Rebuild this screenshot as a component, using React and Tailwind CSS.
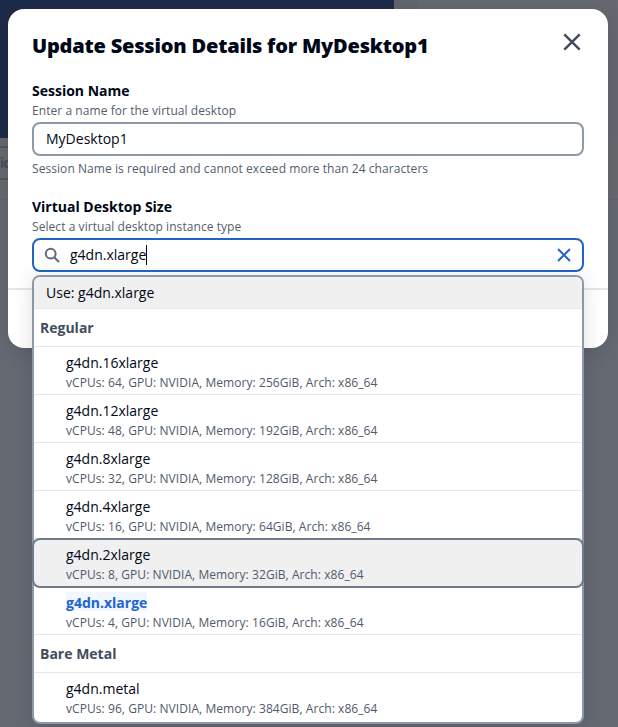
import React from 'react';

const regular = [
  { name: 'g4dn.16xlarge', spec: 'vCPUs: 64, GPU: NVIDIA, Memory: 256GiB, Arch: x86_64' },
  { name: 'g4dn.12xlarge', spec: 'vCPUs: 48, GPU: NVIDIA, Memory: 192GiB, Arch: x86_64' },
  { name: 'g4dn.8xlarge', spec: 'vCPUs: 32, GPU: NVIDIA, Memory: 128GiB, Arch: x86_64' },
  { name: 'g4dn.4xlarge', spec: 'vCPUs: 16, GPU: NVIDIA, Memory: 64GiB, Arch: x86_64' },
  { name: 'g4dn.2xlarge', spec: 'vCPUs: 8, GPU: NVIDIA, Memory: 32GiB, Arch: x86_64', highlighted: true },
  { name: 'g4dn.xlarge', spec: 'vCPUs: 4, GPU: NVIDIA, Memory: 16GiB, Arch: x86_64', match: true },
];
const bareMetal = [
  { name: 'g4dn.metal', spec: 'vCPUs: 96, GPU: NVIDIA, Memory: 384GiB, Arch: x86_64' },
];

function Option({ name, spec, highlighted, match, last }) {
  const frame = highlighted
    ? 'relative z-10 -mx-0.5 -mt-px -mb-px h-[50px] rounded-lg border-2 border-[#6f7c8c] bg-[#f0f0f0] pl-8 pt-1'
    : last
      ? 'h-12 pl-8 pt-[5px]'
      : 'h-12 border-b border-[#e4e6e8] pl-8 pt-[5px]';
  return (
    <li className={frame}>
      <div className="h-[22px] text-sm leading-[22px]">
        {match ? (
          <span className="inline-block h-[19px] bg-[#f0f7ff] align-top font-bold leading-[22px] text-[#2264d1]">
            {name}
          </span>
        ) : (
          name
        )}
      </div>
      <div className="pt-px text-xs leading-4 tracking-[0.065px] text-[#4f596b]">{spec}</div>
    </li>
  );
}

function GroupHeader({ children }) {
  return (
    <div className="h-[38px] border-b border-[#e4e6e8] pl-1.5 pt-2 text-sm font-bold leading-[22px] text-[#414d5c]">
      {children}
    </div>
  );
}

function Dropdown() {
  return (
    <div className="absolute left-0 top-[37px] z-20 h-[449px] w-full rounded-lg border-2 border-[#8d99a8] bg-white shadow-[0_4px_20px_1px_rgba(0,7,22,0.12)]">
      <div className="h-8 rounded-t-md border-b border-[#e4e6e8] bg-[#f0f0f0] pl-3 pt-[5px] text-sm leading-[22px]">
        Use: g4dn.xlarge
      </div>
      <GroupHeader>Regular</GroupHeader>
      <ul>{regular.map((o) => <Option key={o.name} {...o} />)}</ul>
      <GroupHeader>Bare Metal</GroupHeader>
      <ul>{bareMetal.map((o) => <Option key={o.name} {...o} last />)}</ul>
    </div>
  );
}

function Backdrop() {
  return (
    <div className="absolute inset-0">
      <div className="flex h-[138px]">
        <div className="w-[394px] bg-[#1d2b4a]" />
        <div className="w-6 bg-[#62656e]" />
        <div className="grow bg-[#656870]" />
      </div>
      <div className="h-[62px] w-full border-b border-[#5f636c] bg-[#66696f] pt-2">
        <div className="h-[34px] w-10 border-y-2 border-[#505764] text-sm font-bold leading-[30px] tracking-[-1px] text-[#474e5b]">
          io
        </div>
      </div>
    </div>
  );
}

export default function App() {
  return (
    <div className="relative h-[727px] w-[618px] overflow-hidden bg-[#656972] px-2 pt-[9px] font-['Open_Sans','Noto_Sans',sans-serif] text-[#000716]">
      <Backdrop />
      <div className="relative h-[339px] w-[600px] rounded-2xl bg-white shadow-[0_4px_20px_1px_rgba(0,7,22,0.10)]">
        <div className="flex h-[70px] justify-between px-6 pt-[25px]">
          <h1 className="text-xl font-extrabold leading-6 tracking-[-0.2px]">Update Session Details for MyDesktop1</h1>
          <button aria-label="Close" className="h-4 w-6">
            <svg width="24" height="16" viewBox="0 0 24 16" fill="none" stroke="#414d5c" strokeWidth="2.5" className="overflow-visible">
              <path d="M4.3 0.3 19.7 15.7M19.7 0.3 4.3 15.7" />
            </svg>
          </button>
        </div>
        <div className="h-[211px] border-b-2 border-[#e4e6e8] px-6">
          <label className="block pt-px text-sm font-bold leading-[22px]">Session Name</label>
          <p className="pt-px text-xs leading-4 tracking-[0.065px] text-[#525e6e]">Enter a name for the virtual desktop</p>
          <div className="mt-[3px] h-[34px] rounded-lg border-2 border-[#8d99a8] px-3 text-sm leading-[30px]">MyDesktop1</div>
          <p className="pt-1 text-xs leading-[18px] tracking-[0.065px] text-[#525e6e]">Session Name is required and cannot exceed more than 24 characters</p>
          <label className="block pt-[18px] text-sm font-bold leading-[22px]">Virtual Desktop Size</label>
          <p className="pt-px text-xs leading-4 tracking-[0.065px] text-[#525e6e]">Select a virtual desktop instance type</p>
          <div className="relative mt-[3px]">
            <div className="relative flex h-[34px] items-center rounded-lg border-2 border-[#2264c5] pl-2.5 pr-2.5 text-sm">
              <svg width="16" height="16" viewBox="0 0 16 16" fill="none" stroke="#5f6b7a" strokeWidth="2">
                <circle cx="6.7" cy="6.7" r="4.9" />
                <path d="m10.2 10.2 4.8 4.8" />
              </svg>
              <span className="ml-2.5 leading-[22px]">g4dn.xlarge</span>
              <span className="h-5 w-px bg-[#000716]" />
              <svg width="16" height="16" viewBox="0 0 16 16" fill="none" stroke="#2264d1" strokeWidth="2" className="ml-auto">
                <path d="m2 2 12 12M14 2 2 14" />
              </svg>
            </div>
            <Dropdown />
          </div>
        </div>
      </div>
    </div>
  );
}
